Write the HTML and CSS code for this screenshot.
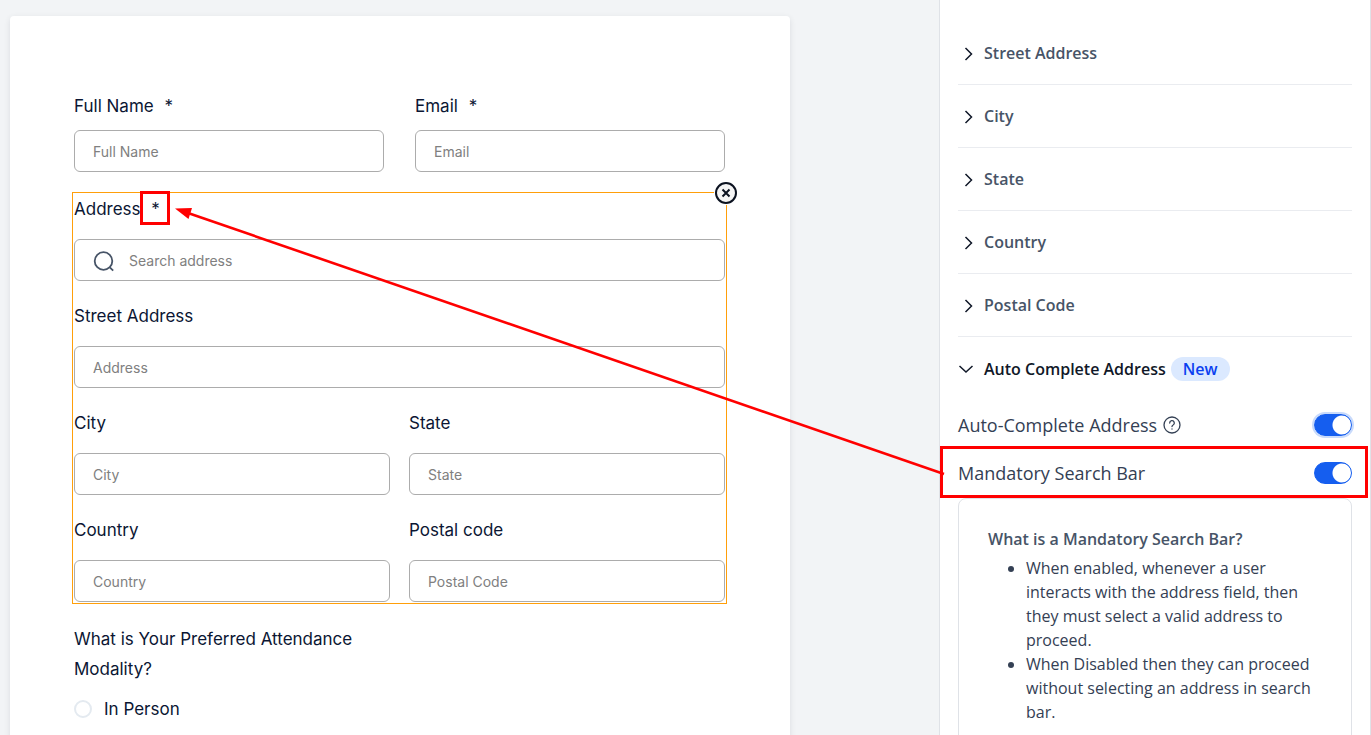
FILE: index.html
```
<!DOCTYPE html>
<html lang="en">
<head>
    <meta charset="UTF-8">
    <meta name="viewport" content="width=device-width, initial-scale=1.0">
    <title>Form Builder</title>
    <link rel="stylesheet" href="styles.css">
</head>
<body>

    <div class="builder">
        <main class="canvas">
            <form class="form-card">
                <div class="row row-wide">
                    <div class="field field-tight">
                        <label for="fullName">Full Name <span class="star">*</span></label>
                        <input type="text" id="fullName" placeholder="Full Name">
                    </div>
                    <div class="field field-tight">
                        <label for="email">Email <span class="star">*</span></label>
                        <input type="text" id="email" placeholder="Email">
                    </div>
                </div>

                <div class="selected">
                    <button type="button" class="btn-remove" aria-label="Remove">
                        <svg width="24" height="24" viewBox="0 0 24 24">
                            <circle cx="12" cy="12" r="10" fill="#f5f5f5" stroke="#0b1220" stroke-width="2"/>
                            <path d="M8.5 8.5l7 7M15.5 8.5l-7 7" fill="none" stroke="#0b1220" stroke-width="2"/>
                        </svg>
                    </button>
                    <div class="field">
                        <label for="search">Address <span class="star marked">*</span></label>
                        <div class="search">
                            <svg width="24" height="24" viewBox="0 0 24 24" fill="none" stroke="#475467" stroke-width="1.8">
                                <circle cx="11.5" cy="12" r="8.8"/>
                                <path d="M17.8 18.3l3.4 3.4"/>
                            </svg>
                            <input type="text" id="search" placeholder="Search address">
                        </div>
                    </div>
                    <div class="field">
                        <label for="street">Street Address</label>
                        <input type="text" id="street" placeholder="Address">
                    </div>
                    <div class="row">
                        <div class="field">
                            <label for="city">City</label>
                            <input type="text" id="city" placeholder="City">
                        </div>
                        <div class="field">
                            <label for="state">State</label>
                            <input type="text" id="state" placeholder="State">
                        </div>
                    </div>
                    <div class="row">
                        <div class="field">
                            <label for="country">Country</label>
                            <input type="text" id="country" placeholder="Country">
                        </div>
                        <div class="field">
                            <label for="postal">Postal code</label>
                            <input type="text" id="postal" placeholder="Postal Code">
                        </div>
                    </div>
                </div>

                <fieldset class="question">
                    <legend>What is Your Preferred Attendance Modality?</legend>
                    <label class="option">
                        <input type="radio" name="modality" value="in-person">
                        In Person
                    </label>
                </fieldset>
            </form>
        </main>

        <aside class="sidebar">
            <button type="button" class="section">
                <svg class="chevron" width="16" height="16" viewBox="0 0 16 16"><path d="M7.5 3l6 6-6 6"/></svg>
                Street Address
            </button>
            <button type="button" class="section">
                <svg class="chevron" width="16" height="16" viewBox="0 0 16 16"><path d="M7.5 3l6 6-6 6"/></svg>
                City
            </button>
            <button type="button" class="section">
                <svg class="chevron" width="16" height="16" viewBox="0 0 16 16"><path d="M7.5 3l6 6-6 6"/></svg>
                State
            </button>
            <button type="button" class="section">
                <svg class="chevron" width="16" height="16" viewBox="0 0 16 16"><path d="M7.5 3l6 6-6 6"/></svg>
                Country
            </button>
            <button type="button" class="section">
                <svg class="chevron" width="16" height="16" viewBox="0 0 16 16"><path d="M7.5 3l6 6-6 6"/></svg>
                Postal Code
            </button>
            <button type="button" class="section section-open">
                <svg class="chevron" width="16" height="16" viewBox="0 0 16 16"><path d="M1.5 5L8 11l6.5-6"/></svg>
                Auto Complete Address
                <span class="badge">New</span>
            </button>

            <div class="setting">
                <label for="autoComplete">Auto-Complete Address</label>
                <svg class="help" width="18" height="18" viewBox="0 0 18 18" fill="none" stroke="#344054" stroke-width="1.3" stroke-linecap="round">
                    <circle cx="9" cy="9" r="8"/>
                    <path d="M6.7 7a2.3 2.3 0 1 1 3.4 2c-.8.4-1.1.8-1.1 1.500M9 13v.1"/>
                </svg>
                <input type="checkbox" class="toggle toggle-focus" id="autoComplete" checked>
            </div>
            <div class="setting setting-marked">
                <label for="mandatory">Mandatory Search Bar</label>
                <input type="checkbox" class="toggle" id="mandatory" checked>
            </div>

            <div class="info">
                <h2>What is a Mandatory Search Bar?</h2>
                <ul>
                    <li>When enabled, whenever a user interacts with the address field, then they must select a valid address to proceed.</li>
                    <li>When Disabled then they can proceed without selecting an address in search bar.</li>
                </ul>
            </div>
        </aside>

        <!-- arrow from the setting to the required mark -->
        <svg class="arrow" width="1371" height="735" viewBox="0 0 1371 735">
            <path d="M944 474L188 213" stroke="#ff0000" stroke-width="2.6" fill="none"/>
            <path d="M175 208.5L192 208l-3.5 11z" fill="#ff0000"/>
        </svg>
    </div>

</body>
</html>
```

FILE: styles.css
```
*,
*::after {
    box-sizing: border-box;
}

body {
    margin: 0;
    background-color: #f2f4f6;
    font-family: Inter, sans-serif;
    font-size: 16px;
    color: #0b1633;
}

button {
    font: inherit;
    color: inherit;
    border: none;
    padding: 0;
    background: none;
    cursor: pointer;
}

.builder {
    display: flex;
    position: relative;
    height: 100vh;
    overflow: hidden;
}

/* Form */
.canvas {
    flex: 1;
    padding: 16px 10px 0;
}

.form-card {
    max-width: 780px;
    min-height: 100vh;
    padding: 75px 65px 64px 64px;
    background-color: #fff;
    border-radius: 4px;
    box-shadow: 0 2px 6px rgba(16, 24, 40, 0.1);
}

.row {
    display: grid;
    grid-template-columns: 1fr 1fr;
    gap: 19px;
}

.row-wide {
    gap: 31px;
}

.field {
    display: flex;
    flex-direction: column;
    gap: 15px;
}

.field-tight {
    gap: 9px;
}

.field label,
.question legend,
.option {
    font-size: 17px;
    font-weight: 400;
    line-height: 30px;
}

.star {
    position: relative;
    margin-left: 6px;
}

.marked::after {
    content: '';
    position: absolute;
    top: -8px;
    left: -11px;
    width: 30px;
    height: 34px;
    border: 3px solid #ff0000;
}

.field input {
    width: 100%;
    height: 42px;
    padding: 0 18px;
    border: 1px solid #acacac;
    border-radius: 6px;
    background-color: #fff;
    font-family: Inter, sans-serif;
    font-size: 14px;
    font-weight: 400;
}

.field input::placeholder {
    color: #808080;
}

.search {
    display: flex;
    position: relative;
}

.search svg {
    position: absolute;
    top: 10px;
    left: 18px;
}

.search input {
    padding-left: 54px;
}

.selected {
    display: flex;
    flex-direction: column;
    gap: 20px;
    position: relative;
    margin: 20px -2px 0;
    padding: 1px;
    border: 1px solid #ff9f0a;
}

.btn-remove {
    position: absolute;
    top: -12px;
    right: -12px;
    width: 24px;
    height: 24px;
    border-radius: 50%;
    background-color: #fff;
}

.btn-remove svg {
    display: block;
}

.question {
    margin: 20px 0 0;
    padding: 0;
    border: none;
}

.question legend {
    max-width: 310px;
    padding: 0;
}

.option {
    display: flex;
    align-items: center;
    gap: 12px;
    margin-top: 10px;
}

.option input {
    appearance: none;
    width: 18px;
    height: 18px;
    margin: 0;
    border: 2px solid #e4eaf0;
    border-radius: 50%;
}

/* Settings panel */
.sidebar {
    width: 432px;
    padding: 22px 18px 0;
    border: 1px solid #dfe2e7;
    border-width: 0 1px;
    background-color: #fff;
    font-family: "Open Sans", "Noto Sans", sans-serif;
}

.section {
    display: flex;
    align-items: center;
    gap: 10px;
    width: 100%;
    height: 63px;
    border-bottom: 1px solid #eaecf0;
    color: #475467;
    font-weight: 600;
}

.section-open {
    height: 64px;
    border-bottom: none;
    color: #101828;
}

.chevron {
    fill: none;
    stroke: #101828;
    stroke-width: 1.5;
}

.badge {
    padding: 0 12px;
    margin-left: -5px;
    border-radius: 12px;
    background-color: #dbe9ff;
    color: #0a3ff0;
    line-height: 24px;
}

.setting {
    display: flex;
    align-items: center;
    gap: 6px;
    position: relative;
    height: 48px;
    color: #344054;
    font-size: 18px;
}

.setting-marked::after {
    content: '';
    position: absolute;
    top: -3px;
    left: -18px;
    right: -16px;
    height: 52px;
    border: 3px solid #ff0000;
    pointer-events: none;
}

.toggle {
    appearance: none;
    width: 38px;
    height: 22px;
    margin: 0 0 0 auto;
    border: 1px solid #155eef;
    border-radius: 11px;
    background: radial-gradient(circle at 27px 50%, #fff 9px, #155eef 10px);
}

.toggle-focus {
    box-shadow: 0 0 0 2px #c8dafb;
}

.info {
    padding: 28px 29px;
    height: 300px;
    margin-top: 1px;
    border: 1px solid #dfe2e7;
    border-radius: 8px;
    color: #344054;
    line-height: 24px;
}

.info h2 {
    margin: 0;
    color: #475467;
    font-size: 16px;
    font-weight: 600;
}

.info ul {
    margin: 5px 0 0;
    padding-left: 38px;
}

.arrow {
    position: absolute;
    top: 0;
    left: 0;
    pointer-events: none;
}
```
